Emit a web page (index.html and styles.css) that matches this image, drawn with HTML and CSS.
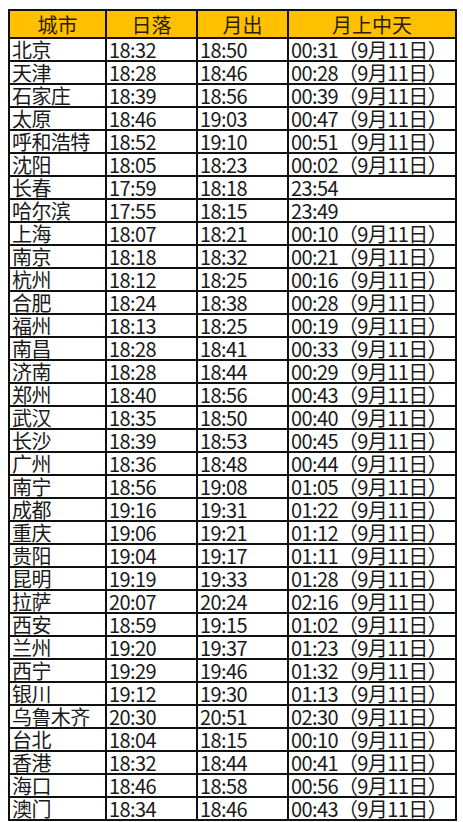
FILE: index.html
```html
<!DOCTYPE html>
<html lang="zh-CN">
<head>
<meta charset="utf-8">
<title>月出时间表</title>
<link rel="stylesheet" href="styles.css">
</head>
<body>
<table class="moon">
<colgroup>
<col class="c1"><col class="c2"><col class="c3"><col class="c4">
</colgroup>
<thead>
<tr><th>城市</th><th>日落</th><th>月出</th><th>月上中天</th></tr>
</thead>
<tbody>
<tr><td>北京</td><td>18:32</td><td>18:50</td><td>00:31（9月11日）</td></tr>
<tr><td>天津</td><td>18:28</td><td>18:46</td><td>00:28（9月11日）</td></tr>
<tr><td>石家庄</td><td>18:39</td><td>18:56</td><td>00:39（9月11日）</td></tr>
<tr><td>太原</td><td>18:46</td><td>19:03</td><td>00:47（9月11日）</td></tr>
<tr><td>呼和浩特</td><td>18:52</td><td>19:10</td><td>00:51（9月11日）</td></tr>
<tr><td>沈阳</td><td>18:05</td><td>18:23</td><td>00:02（9月11日）</td></tr>
<tr><td>长春</td><td>17:59</td><td>18:18</td><td>23:54</td></tr>
<tr><td>哈尔滨</td><td>17:55</td><td>18:15</td><td>23:49</td></tr>
<tr><td>上海</td><td>18:07</td><td>18:21</td><td>00:10（9月11日）</td></tr>
<tr><td>南京</td><td>18:18</td><td>18:32</td><td>00:21（9月11日）</td></tr>
<tr><td>杭州</td><td>18:12</td><td>18:25</td><td>00:16（9月11日）</td></tr>
<tr><td>合肥</td><td>18:24</td><td>18:38</td><td>00:28（9月11日）</td></tr>
<tr><td>福州</td><td>18:13</td><td>18:25</td><td>00:19（9月11日）</td></tr>
<tr><td>南昌</td><td>18:28</td><td>18:41</td><td>00:33（9月11日）</td></tr>
<tr><td>济南</td><td>18:28</td><td>18:44</td><td>00:29（9月11日）</td></tr>
<tr><td>郑州</td><td>18:40</td><td>18:56</td><td>00:43（9月11日）</td></tr>
<tr><td>武汉</td><td>18:35</td><td>18:50</td><td>00:40（9月11日）</td></tr>
<tr><td>长沙</td><td>18:39</td><td>18:53</td><td>00:45（9月11日）</td></tr>
<tr><td>广州</td><td>18:36</td><td>18:48</td><td>00:44（9月11日）</td></tr>
<tr><td>南宁</td><td>18:56</td><td>19:08</td><td>01:05（9月11日）</td></tr>
<tr><td>成都</td><td>19:16</td><td>19:31</td><td>01:22（9月11日）</td></tr>
<tr><td>重庆</td><td>19:06</td><td>19:21</td><td>01:12（9月11日）</td></tr>
<tr><td>贵阳</td><td>19:04</td><td>19:17</td><td>01:11（9月11日）</td></tr>
<tr><td>昆明</td><td>19:19</td><td>19:33</td><td>01:28（9月11日）</td></tr>
<tr><td>拉萨</td><td>20:07</td><td>20:24</td><td>02:16（9月11日）</td></tr>
<tr><td>西安</td><td>18:59</td><td>19:15</td><td>01:02（9月11日）</td></tr>
<tr><td>兰州</td><td>19:20</td><td>19:37</td><td>01:23（9月11日）</td></tr>
<tr><td>西宁</td><td>19:29</td><td>19:46</td><td>01:32（9月11日）</td></tr>
<tr><td>银川</td><td>19:12</td><td>19:30</td><td>01:13（9月11日）</td></tr>
<tr><td>乌鲁木齐</td><td>20:30</td><td>20:51</td><td>02:30（9月11日）</td></tr>
<tr><td>台北</td><td>18:04</td><td>18:15</td><td>00:10（9月11日）</td></tr>
<tr><td>香港</td><td>18:32</td><td>18:44</td><td>00:41（9月11日）</td></tr>
<tr><td>海口</td><td>18:46</td><td>18:58</td><td>00:56（9月11日）</td></tr>
<tr><td>澳门</td><td>18:34</td><td>18:46</td><td>00:43（9月11日）</td></tr>
</tbody>
</table>
</body>
</html>
```
FILE: styles.css
```css
html, body {
  margin: 0;
  padding: 0;
  background: #ffffff;
}
body {
  padding: 9px 0 0 8px;
  font-family: "Noto Sans CJK SC", "Noto Sans", sans-serif;
  color: #1a1a1a;
}
.moon {
  border-collapse: separate;
  border-spacing: 0;
  table-layout: fixed;
  width: 449px;
  border-top: 2px solid #111;
  border-left: 2px solid #111;
}
.c1 { width: 97px; }
.c2 { width: 91px; }
.c3 { width: 91px; }
.c4 { width: 168px; }
.moon th,
.moon td {
  box-sizing: border-box;
  border-right: 2px solid #111;
  border-bottom: 2px solid #111;
  padding: 1px 0 0 2px;
  font-size: 20px;
  font-weight: 400;
  letter-spacing: -0.6px;
  line-height: 20px;
  white-space: nowrap;
  text-align: left;
  vertical-align: middle;
}
.moon th {
  height: 28px;
  background: #ffc000;
  text-align: center;
  letter-spacing: 0;
  padding: 1px 0 0 0;
  color: #2a2000;
}
.moon td {
  height: 22.82px;
}
```
